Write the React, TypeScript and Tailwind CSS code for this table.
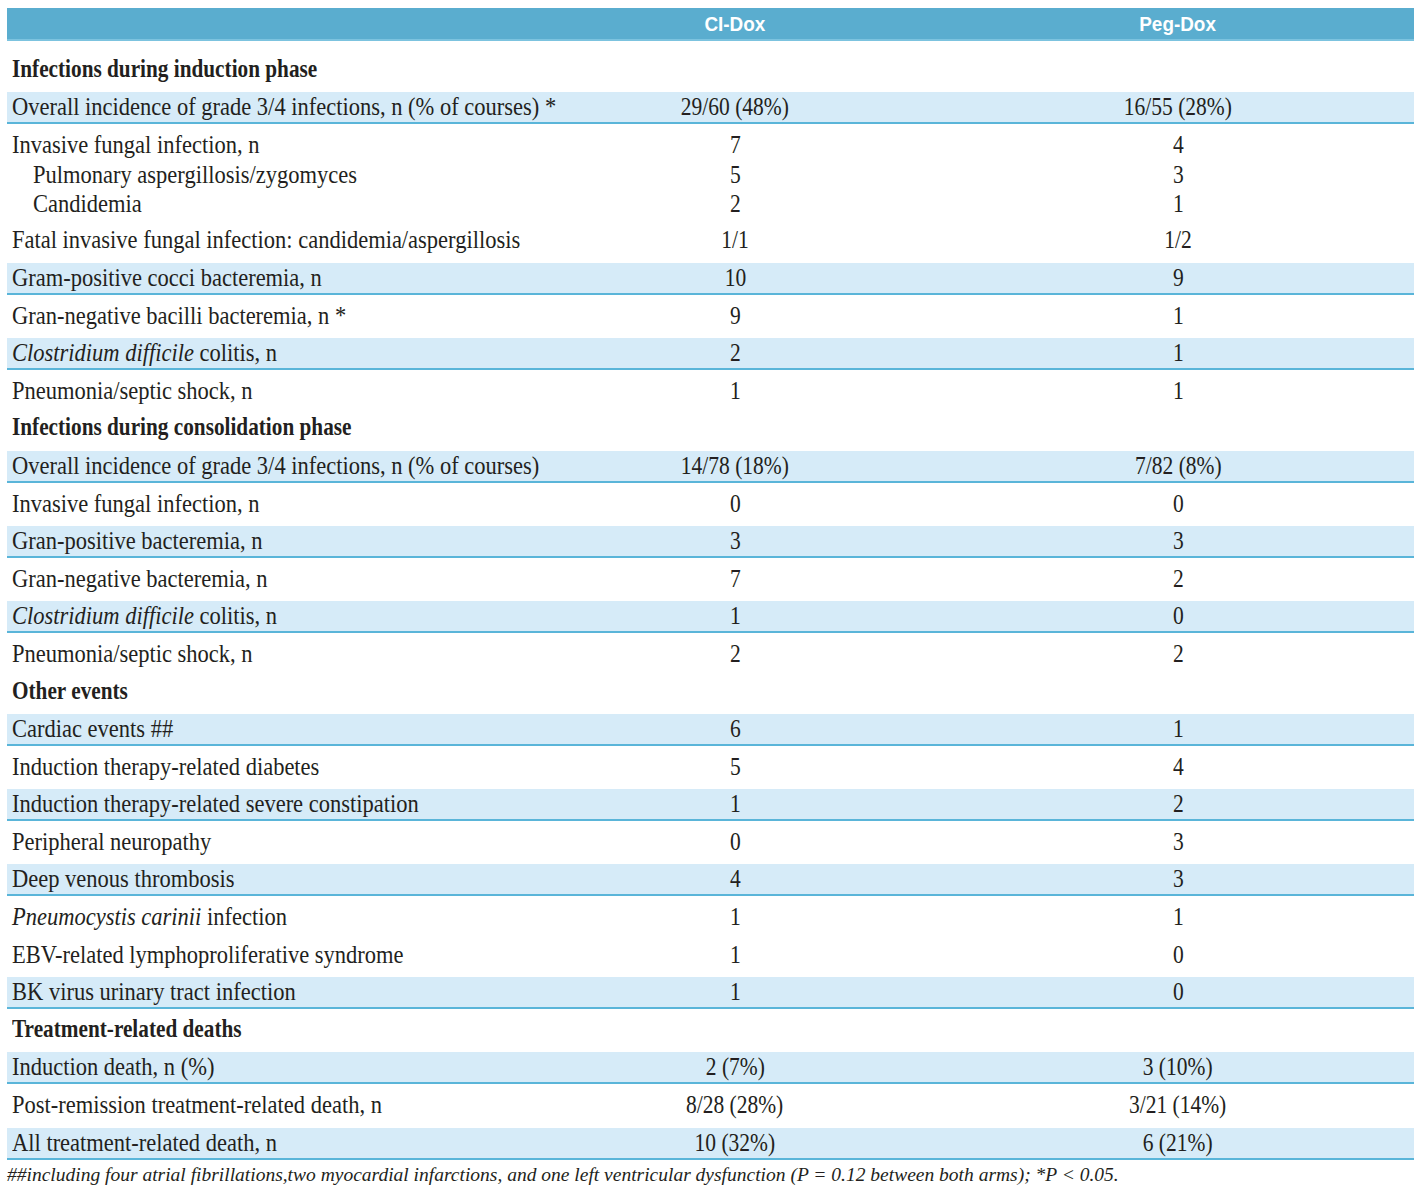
import React from "react";

type Line = { label: React.ReactNode; a: string; b: string; indent?: boolean };
type Row =
  | { kind: "section"; label: string }
  | { kind: "row"; shaded?: boolean; lines: Line[] };

const I = ({ children }: { children: React.ReactNode }) => <i>{children}</i>;

const rows: Row[] = [
  { kind: "section", label: "Infections during induction phase" },
  { kind: "row", shaded: true, lines: [{ label: "Overall incidence of grade 3/4 infections, n (% of courses) *", a: "29/60 (48%)", b: "16/55 (28%)" }] },
  {
    kind: "row",
    lines: [
      { label: "Invasive fungal infection, n", a: "7", b: "4" },
      { label: "Pulmonary aspergillosis/zygomyces", a: "5", b: "3", indent: true },
      { label: "Candidemia", a: "2", b: "1", indent: true },
    ],
  },
  { kind: "row", lines: [{ label: "Fatal invasive fungal infection: candidemia/aspergillosis", a: "1/1", b: "1/2" }] },
  { kind: "row", shaded: true, lines: [{ label: "Gram-positive cocci bacteremia, n", a: "10", b: "9" }] },
  { kind: "row", lines: [{ label: "Gran-negative bacilli bacteremia, n *", a: "9", b: "1" }] },
  { kind: "row", shaded: true, lines: [{ label: <><I>Clostridium difficile</I> colitis, n</>, a: "2", b: "1" }] },
  { kind: "row", lines: [{ label: "Pneumonia/septic shock, n", a: "1", b: "1" }] },
  { kind: "section", label: "Infections during consolidation phase" },
  { kind: "row", shaded: true, lines: [{ label: "Overall incidence of grade 3/4 infections, n (% of courses)", a: "14/78 (18%)", b: "7/82 (8%)" }] },
  { kind: "row", lines: [{ label: "Invasive fungal infection, n", a: "0", b: "0" }] },
  { kind: "row", shaded: true, lines: [{ label: "Gran-positive bacteremia, n", a: "3", b: "3" }] },
  { kind: "row", lines: [{ label: "Gran-negative bacteremia, n", a: "7", b: "2" }] },
  { kind: "row", shaded: true, lines: [{ label: <><I>Clostridium difficile</I> colitis, n</>, a: "1", b: "0" }] },
  { kind: "row", lines: [{ label: "Pneumonia/septic shock, n", a: "2", b: "2" }] },
  { kind: "section", label: "Other events" },
  { kind: "row", shaded: true, lines: [{ label: "Cardiac events ##", a: "6", b: "1" }] },
  { kind: "row", lines: [{ label: "Induction therapy-related diabetes", a: "5", b: "4" }] },
  { kind: "row", shaded: true, lines: [{ label: "Induction therapy-related severe constipation", a: "1", b: "2" }] },
  { kind: "row", lines: [{ label: "Peripheral neuropathy", a: "0", b: "3" }] },
  { kind: "row", shaded: true, lines: [{ label: "Deep venous thrombosis", a: "4", b: "3" }] },
  { kind: "row", lines: [{ label: <><I>Pneumocystis carinii</I> infection</>, a: "1", b: "1" }] },
  { kind: "row", lines: [{ label: "EBV-related lymphoproliferative syndrome", a: "1", b: "0" }] },
  { kind: "row", shaded: true, lines: [{ label: "BK virus urinary tract infection", a: "1", b: "0" }] },
  { kind: "section", label: "Treatment-related deaths" },
  { kind: "row", shaded: true, lines: [{ label: "Induction death, n (%)", a: "2 (7%)", b: "3 (10%)" }] },
  { kind: "row", lines: [{ label: "Post-remission treatment-related death, n", a: "8/28 (28%)", b: "3/21 (14%)" }] },
  { kind: "row", shaded: true, lines: [{ label: "All treatment-related death, n", a: "10 (32%)", b: "6 (21%)" }] },
];

const serif = "font-['Liberation_Serif',serif]";

function Cells({ line, first }: { line: Line; first: boolean }) {
  return (
    <div className={`grid grid-cols-[521px_414px_472px] items-center ${first ? "h-[30px]" : "h-[29px]"}`}>
      <div className={`whitespace-nowrap ${line.indent ? "pl-[26px]" : "pl-[5px]"}`}>
        <span className="inline-block origin-left scale-x-[0.9]">{line.label}</span>
      </div>
      <div className="whitespace-nowrap text-center">
        <span className="inline-block origin-center scale-x-[0.86]">{line.a}</span>
      </div>
      <div className="whitespace-nowrap text-center">
        <span className="inline-block origin-center scale-x-[0.86]">{line.b}</span>
      </div>
    </div>
  );
}

export default function App() {
  return (
    <div className={`w-[1422px] bg-white pt-[8px] pl-[7px] text-[#231f20] ${serif}`}>
      <div className="w-[1407px]">
        <div className="grid h-[33px] grid-cols-[521px_414px_472px] items-center border-b-2 border-[#7cc3df] bg-[#5aadcf] font-['Liberation_Sans',sans-serif] text-[21px] font-bold text-white">
          <div />
          <div className="text-center">
            <span className="inline-block origin-center scale-x-[0.9]">CI-Dox</span>
          </div>
          <div className="text-center">
            <span className="inline-block origin-center scale-x-[0.9]">Peg-Dox</span>
          </div>
        </div>
        <div className="h-[8px]" />
        {rows.map((r, i) =>
          r.kind === "section" ? (
            <div key={i} className="pt-[5.6px]">
              <div className="flex h-[32px] items-start pl-[5px] text-[25px] font-bold leading-[28px]">
                <span className="inline-block origin-left scale-x-[0.85] whitespace-nowrap">{r.label}</span>
              </div>
            </div>
          ) : (
            <div key={i} className="pt-[5.6px]">
              <div
                className={`border-b-2 text-[25px] leading-[30px] ${
                  r.shaded ? "border-[#5ab5d9] bg-[#d6ebf8]" : "border-transparent"
                }`}
              >
                {r.lines.map((l, j) => (
                  <Cells key={j} line={l} first={j === 0} />
                ))}
              </div>
            </div>
          )
        )}
        <div className="pt-[4px] pb-[8px] text-[19.5px] italic leading-[22px] whitespace-nowrap">
          <span className="inline-block origin-left">
            ##including four atrial fibrillations,two myocardial infarctions, and one left ventricular dysfunction (P = 0.12 between both arms); *P &lt; 0.05.
          </span>
        </div>
      </div>
    </div>
  );
}
